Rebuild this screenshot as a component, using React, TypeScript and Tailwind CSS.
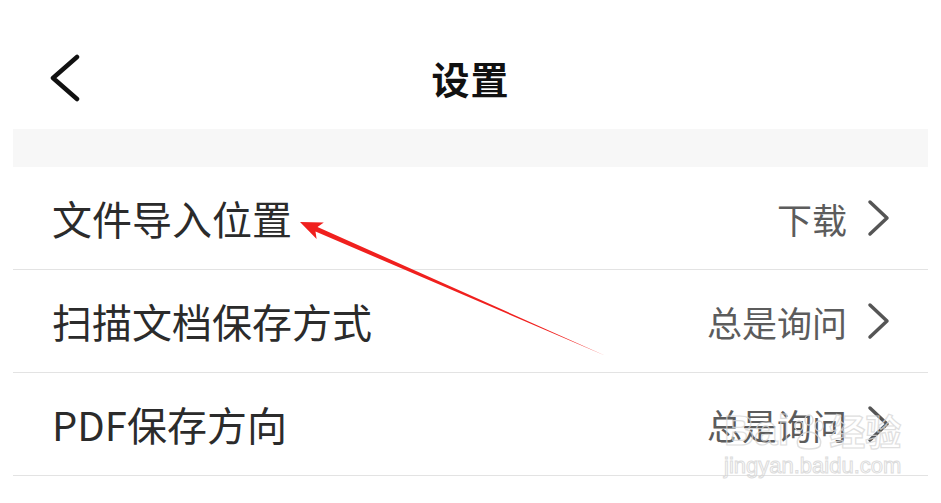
export default function App() {
  const rows = [
    { label: "文件导入位置", value: "下载" },
    { label: "扫描文档保存方式", value: "总是询问" },
    { label: "PDF保存方向", value: "总是询问" },
  ];

  return (
    <div
      className="relative w-[941px] h-[503px] overflow-hidden bg-white"
      style={{ fontFamily: '"Noto Sans CJK SC", "Noto Sans", sans-serif' }}
    >
      {/* header */}
      <div className="h-[129px] pt-[55px]">
        <div className="relative flex h-[46px] items-center justify-center">
          <svg className="absolute left-[49px] top-[-1px]" width="32" height="48" viewBox="0 0 32 48" fill="none">
            <path d="M28 3 L4 24 L28 45" stroke="#111" strokeWidth="4.5" strokeLinecap="round" strokeLinejoin="round" />
          </svg>
          <h1 className="text-[38px] font-bold leading-none text-[#111] tracking-[1px]">设置</h1>
        </div>
      </div>

      <div className="mx-[13px]">
        <div className="h-[38px] bg-[#f7f7f7]" />
        {rows.map((row) => (
          <div
            key={row.label}
            className="flex h-[103px] items-center justify-between border-b border-[#e3e3e3] pl-[39px] pr-[37px]"
          >
            <span className="text-[40px] leading-none text-[#2b2b2b]">{row.label}</span>
            <div className="flex items-center gap-[20px]">
              <span className="text-[35px] leading-none text-[#5c5c5c]">{row.value}</span>
              <svg width="24" height="38" viewBox="0 0 24 38" fill="none">
                <path d="M3 3 L20 19 L3 35" stroke="#555" strokeWidth="3.5" strokeLinecap="round" strokeLinejoin="round" />
              </svg>
            </div>
          </div>
        ))}
      </div>

      {/* watermark */}
      <div className="pointer-events-none absolute left-[724px] top-[410px] flex flex-col items-center opacity-80">
        <div
          className="flex items-end text-[42px] font-bold leading-none text-transparent"
          style={{ WebkitTextStroke: "1.2px #d8d8d8", fontFamily: '"Liberation Sans", "Noto Sans CJK SC", sans-serif' }}
        >
          <span>Bai</span>
          <svg width="40" height="40" viewBox="0 0 40 40" fill="none" stroke="#d8d8d8" strokeWidth="1.5">
            <ellipse cx="10" cy="14" rx="4" ry="5" />
            <ellipse cx="20" cy="8" rx="4" ry="5" />
            <ellipse cx="30" cy="14" rx="4" ry="5" />
            <path d="M9 34 C6 26 14 20 20 20 C26 20 34 26 31 34 C28 38 12 38 9 34 Z" />
          </svg>
          <span className="text-[36px]">经验</span>
        </div>
        <div
          className="mt-[3px] text-[22px] leading-none text-transparent"
          style={{ WebkitTextStroke: "1px #d4d4d4", fontFamily: '"Liberation Sans", sans-serif' }}
        >
          jingyan.baidu.com
        </div>
      </div>

      {/* red arrow */}
      <svg className="pointer-events-none absolute left-0 top-0" width="941" height="503" viewBox="0 0 941 503">
        <polygon
          points="300,222 316.6,239 315.5,231.5 606,356 317.5,226.9 323.8,222.6"
          fill="#f0201e"
        />
      </svg>
    </div>
  );
}
